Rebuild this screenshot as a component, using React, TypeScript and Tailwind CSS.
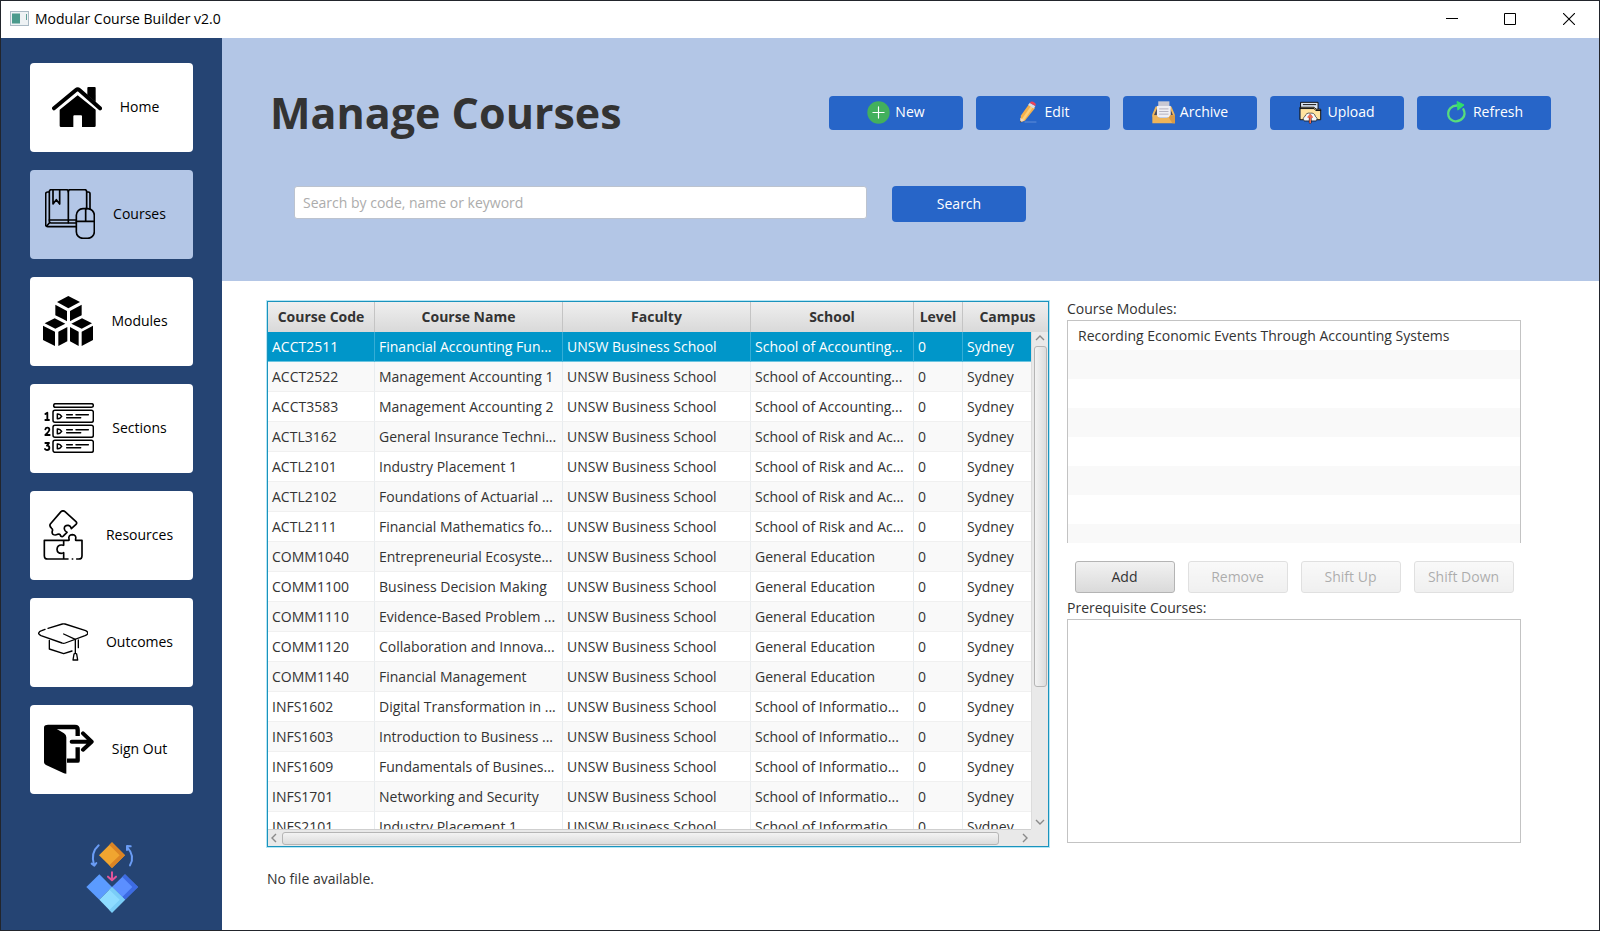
import type { ReactNode } from "react";

type Course = [string, string, string, string, string];

const faculty = "UNSW Business School";

const courses: Course[] = [
  ["ACCT2511", "Financial Accounting Fun...", "School of Accounting...", "0", "Sydney"],
  ["ACCT2522", "Management Accounting 1", "School of Accounting...", "0", "Sydney"],
  ["ACCT3583", "Management Accounting 2", "School of Accounting...", "0", "Sydney"],
  ["ACTL3162", "General Insurance Techni...", "School of Risk and Ac...", "0", "Sydney"],
  ["ACTL2101", "Industry Placement 1", "School of Risk and Ac...", "0", "Sydney"],
  ["ACTL2102", "Foundations of Actuarial ...", "School of Risk and Ac...", "0", "Sydney"],
  ["ACTL2111", "Financial Mathematics fo...", "School of Risk and Ac...", "0", "Sydney"],
  ["COMM1040", "Entrepreneurial Ecosyste...", "General Education", "0", "Sydney"],
  ["COMM1100", "Business Decision Making", "General Education", "0", "Sydney"],
  ["COMM1110", "Evidence-Based Problem ...", "General Education", "0", "Sydney"],
  ["COMM1120", "Collaboration and Innova...", "General Education", "0", "Sydney"],
  ["COMM1140", "Financial Management", "General Education", "0", "Sydney"],
  ["INFS1602", "Digital Transformation in ...", "School of Informatio...", "0", "Sydney"],
  ["INFS1603", "Introduction to Business ...", "School of Informatio...", "0", "Sydney"],
  ["INFS1609", "Fundamentals of Busines...", "School of Informatio...", "0", "Sydney"],
  ["INFS1701", "Networking and Security", "School of Informatio...", "0", "Sydney"],
  ["INFS2101", "Industry Placement 1", "School of Informatio...", "0", "Sydney"],
];

const NavSvg = ({ box, children }: { box: string; children: ReactNode }) => (
  <svg viewBox={box} className="size-[50px] shrink-0" fill="none" stroke="#000" strokeLinecap="round" strokeLinejoin="round" aria-hidden="true">
    {children}
  </svg>
);

const HomeIcon = () => (
  <NavSvg box="153 246 150 150">
    <g fill="#000" stroke="none">
      <path d="M259 264q0-3 3-3h19q3 0 3 3v42l-25-21z" />
      <path d="M230 286l54 43v48q0 4-4 4h-37v-32q0-3-3-3h-20q-3 0-3 3v32h-37q-4 0-4-4v-48z" />
    </g>
    <path d="M159 325l66-55q5-4 10 0l62 55" strokeWidth="12" />
  </NavSvg>
);

const CoursesIcon = () => (
  <NavSvg box="135 567 150 150">
    <g strokeWidth="5">
      <path d="M228 680h-85q-6 0-6-6v-92q0-6 6-6h5" />
      <path d="M228 669h-75q-5 0-5-5v-89q0-6 6-6h45q6 0 6 6 0-6 6-6h43q6 0 6 6v51" />
      <path d="M205 575v93M148 660h80M148 669l-8 9M260 576h5q5 0 5 5v47" />
      <path d="M159 570v42l10-13 10 13v-42" />
      <rect x="229" y="626" width="54" height="89" rx="20" />
      <path d="M229 664h54M257 626v38" />
    </g>
  </NavSvg>
);

const ModulesIcon = () => (
  <NavSvg box="126 107 150 150">
    <g fill="#000" stroke="none">
      <path d="M202 107l35 18-35 19-34-19z" />
      <path d="M163 133l35 19v31l-12-7-23-11zM242 133l-35 19v31l12-7 23-11z" />
      <path d="M161 174l32 16-30 15-32-16z" />
      <path d="M243 174l-32 16 31 15 31-16z" />
      <path d="M126 196l36 18v43l-36-18zM172 214l27-14v43l-27 14zM276 196l-34 18v43l34-18zM233 214l-26-14v43l26 14z" />
    </g>
  </NavSvg>
);

const SectionsIcon = () => (
  <NavSvg box="128 429 150 150">
    <g strokeWidth="4.5">
      <rect x="157" y="431" width="119" height="11" rx="5.5" />
      {[451, 496, 541].map((y) => (
        <g key={y}>
          <rect x="155" y={y} width="121" height="36" rx="6" />
          <path d={`M168 ${y + 11}v14q8 1 13-7-5-8-13-7zM196 ${y + 13}h17M224 ${y + 13}h37M196 ${y + 22}h42`} />
        </g>
      ))}
      <path d="M132 462l6-4v22M132 480h11" strokeWidth="5.5" />
      <path d="M132 508q1-5 6-5 6 0 6 6 0 4-12 16h13" strokeWidth="5.5" />
      <path d="M132 549h11l-6 8q7 0 7 6 0 7-7 7-4 0-6-3" strokeWidth="5.5" />
    </g>
  </NavSvg>
);

const ResourcesIcon = () => (
  <NavSvg box="115 750 150 150">
    <g strokeWidth="5">
      <path d="M184 755q6-5 12 0l33 30q4 4 0 8l-14 13q-2-9-9-10-13-1-12 11 1 7 8 10l-10 10q-4 5-9 1-2-8-9-5-8 4-14 0-4-4-2-10 2-5-2-8-8-7-4-13z" />
      <path d="M192 841h15q2 0 1-4-3-12 10-13 13 1 10 13-1 4 1 4h18v46q0 10-10 10h-6M192 841v15q-3-1-7-1-12 0-13 13 1 12 13 12 4 0 7-2v19M192 841h-58v46q0 10 10 10h61M218 897h1" />
    </g>
  </NavSvg>
);

const OutcomesIcon = () => (
  <NavSvg box="111 111 150 150">
    <g strokeWidth="4">
      <path d="M141 145l43-13q4-1 8 0l62 20q8 4 6 9-1 3-8 6l-59 22q-5 2-10 0l-63-22q-8-4-7-8 2-5 9-7l10-4" />
      <path d="M188 162l35 16v40M145 181v26l43 14 25-8M232 180v23" />
      <path d="M219 222q4-4 8 0l3 18h-14z" />
    </g>
  </NavSvg>
);

const SignOutIcon = () => (
  <NavSvg box="126 431 150 150">
    <path d="M136 440h83q8 0 8 8v19M227 501v40h-32" strokeWidth="13" strokeLinecap="butt" />
    <path d="M126 442q0-8 8-8h10l42 25q7 4 7 12v109q-5 0-9-2l-52-24q-6-3-6-9z" fill="#000" stroke="none" />
    <path d="M209 484h58M243 459l26 25-26 24" strokeWidth="12" />
  </NavSvg>
);

const BrandMark = () => (
  <svg viewBox="258 787 156 213" className="h-[71px] w-[52px]" fill="none" strokeLinecap="round" strokeLinejoin="round" role="img" aria-label="Module blocks">
    <path d="M336 788l39 39-39 38-39-38z" fill="#f0a530" />
    <path d="M336 788l39 39-39 38-8-8 31-30-31-31z" fill="#db8424" />
    <path d="M298 884l38 38-38 38-39-38z" fill="#5b9bff" />
    <path d="M375 884l39 38-39 38-39-38z" fill="#5b8fff" />
    <path d="M375 884l39 38-39 38-8-8 30-30-30-30z" fill="#3d6be3" />
    <path d="M336 922l39 38-39 39-38-39z" fill="#8edcff" />
    <path d="M336 922l39 38-39 39-8-8 31-31-31-30z" fill="#7acdf7" />
    <path d="M336 878v24M324 891l12 11 12-11" stroke="#e0559a" strokeWidth="6" />
    <path d="M296 797q-25 22-14 59M275 852l8 6 6-8M390 857q16-28-8-54M381 811v-12l11 1" stroke="#6a9cf5" strokeWidth="6" />
  </svg>
);

const ActSvg = ({ box, children }: { box: string; children: ReactNode }) => (
  <svg viewBox={box} className="size-[23px] shrink-0" fill="none" strokeLinecap="round" strokeLinejoin="round" aria-hidden="true">
    {children}
  </svg>
);

const NewIcon = () => (
  <ActSvg box="201 122 70 70">
    <circle cx="236" cy="157" r="34" fill="#43b05c" />
    <path d="M236 140v34M219 157h34" stroke="#fff" strokeWidth="3.5" />
  </ActSvg>
);

const EditIcon = () => (
  <ActSvg box="650 121 70 70">
    <path d="M687 130l18 12-31 39-14 5 2-21z" fill="#f5b04a" />
    <path d="M694 134l6 4-29 42-7-3z" fill="#fbd07c" />
    <path d="M660 172l12 8-12 6z" fill="#f0d8c0" />
    <path d="M660 181l4 4-5 2z" fill="#444" />
    <path d="M684 133l5-7 17 10-5 8z" fill="#d8dce4" />
    <path d="M689 127q3-6 10-4l6 4q4 3 1 9z" fill="#ee4358" />
    <path d="M674 185h34" stroke="#6d95dc" strokeWidth="2.5" />
  </ActSvg>
);

const ArchiveIcon = () => (
  <ActSvg box="1055 121 70 70">
    <path d="M1066 138h12v30h-22v-7zM1114 138h-12v30h22v-7z" fill="#edb65c" />
    <path d="M1070 144l-9 20h12v-20zM1110 144l9 20h-12v-20z" fill="#4b4a58" />
    <path d="M1074 122h34v16h-34z" fill="#c9c8d2" />
    <path d="M1070 136h42v36h-42z" fill="#efeef3" />
    <path d="M1078 145h26M1078 153h26M1078 161h26" stroke="#b4b2c0" strokeWidth="3" />
    <path d="M1056 164h14q3 9 10 9h20q7 0 10-9h15v25h-69z" fill="#eeb45a" />
    <path d="M1106 171q3-3 4-7h15v25h-8z" fill="#d99a45" />
  </ActSvg>
);

const UploadIcon = () => (
  <ActSvg box="358 301 70 70">
    <g stroke="#111" strokeWidth="3">
      <path d="M364 305h52v22h-52z" fill="#dce6f2" />
      <path d="M371 312h38" />
      <path d="M362 320h42l6 6h14v32h-62z" fill="#ffe3a0" />
      <path d="M362 324h42l5 6h15" />
      <path d="M373 361q-7-9 3-13 4-12 16-10 13-2 16 10 9 4 3 13z" fill="#f4f7fb" strokeWidth="2" />
    </g>
    <path d="M392 366v-20" stroke="#111" strokeWidth="8" />
    <path d="M392 367v-22M386 350l6-6 6 6" stroke="#f26a4f" strokeWidth="5" />
  </ActSvg>
);

const RefreshIcon = () => (
  <ActSvg box="796 304 70 70">
    <path d="M852 329q8 15-2 27-9 11-23 10-15-2-20-15-4-14 5-25 10-10 25-8" stroke="#58dc7c" strokeWidth="7" />
    <path d="M834 306l20 10-18 15z" fill="#2fe06a" stroke="#2fe06a" strokeWidth="3" />
  </ActSvg>
);

const navItems = [
  { label: "Home", icon: <HomeIcon /> },
  { label: "Courses", icon: <CoursesIcon />, active: true },
  { label: "Modules", icon: <ModulesIcon /> },
  { label: "Sections", icon: <SectionsIcon /> },
  { label: "Resources", icon: <ResourcesIcon /> },
  { label: "Outcomes", icon: <OutcomesIcon /> },
  { label: "Sign Out", icon: <SignOutIcon /> },
];

const actions = [
  { label: "New", icon: <NewIcon /> },
  { label: "Edit", icon: <EditIcon /> },
  { label: "Archive", icon: <ArchiveIcon /> },
  { label: "Upload", icon: <UploadIcon /> },
  { label: "Refresh", icon: <RefreshIcon /> },
];

const Chevron = ({ d }: { d: string }) => (
  <svg viewBox="0 0 12 12" className="size-3 shrink-0" fill="none" stroke="#8a8a8a" strokeWidth="1.4" aria-hidden="true">
    <path d={d} />
  </svg>
);

function TitleBar() {
  return (
    <div className="flex h-[37px] shrink-0 items-center bg-white pb-0.5 pl-[9px]">
      <svg viewBox="0 0 19 15" className="h-[15px] w-[19px]" aria-hidden="true">
        <rect x=".5" y=".5" width="18" height="14" fill="#eef2f4" stroke="#a9b9c4" />
        <rect x="2" y="2.5" width="8" height="10" fill="#4a9a8c" />
        <path d="M16.5 3v6" stroke="#5f9f96" />
      </svg>
      <span className="ml-1.5 flex-1 text-sm text-black">Modular Course Builder v2.0</span>
      <button aria-label="Minimize" className="flex h-full w-[58px] items-center justify-center">
        <svg viewBox="0 0 12 12" className="size-3" stroke="#000"><path d="M0 5.5h12" /></svg>
      </button>
      <button aria-label="Maximize" className="flex h-full w-[58px] items-center justify-center">
        <svg viewBox="0 0 12 12" className="size-3" fill="none" stroke="#000"><path d="M.5.5h11v11H.5z" /></svg>
      </button>
      <button aria-label="Close" className="flex h-full w-[60px] items-center justify-center">
        <svg viewBox="0 0 12 12" className="size-3" stroke="#000" strokeWidth="1.1"><path d="M0 0l12 12M12 0L0 12" /></svg>
      </button>
    </div>
  );
}

function Sidebar() {
  return (
    <nav className="flex w-[221px] shrink-0 flex-col gap-[18px] overflow-hidden bg-[#254473] pt-[25px] pr-[29px] pl-[29px]">
      {navItems.map((n) => (
        <button
          key={n.label}
          className={`flex h-[89px] shrink-0 items-center justify-center gap-[18px] rounded-[4px] pr-3 pb-0.5 text-sm text-black ${n.active ? "bg-[#b3c6e6]" : "bg-white"}`}
        >
          {n.icon}
          {n.label}
        </button>
      ))}
      <div className="mt-[30px] flex justify-center">
        <BrandMark />
      </div>
    </nav>
  );
}

function Header() {
  return (
    <header className="shrink-0 bg-[#b3c6e6] pt-8 pr-12 pb-[59px] pl-12">
      <div className="flex h-[86px] items-center justify-between">
        <h1 className="pb-0.5 text-[43px] leading-none font-bold whitespace-nowrap">Manage Courses</h1>
        <div className="flex gap-[13px]">
          {actions.map((a) => (
            <button key={a.label} className="flex h-[34px] w-[134px] items-center justify-center gap-[5px] rounded-[4px] bg-[#2765c8] pb-0.5 text-sm text-white">
              {a.icon}
              {a.label}
            </button>
          ))}
        </div>
      </div>
      <form className="mt-[30px] ml-6 flex items-start gap-[25px]" onSubmit={(e) => e.preventDefault()}>
        <input
          aria-label="Search courses"
          placeholder="Search by code, name or keyword"
          className="h-[33px] w-[573px] rounded-[3px] border border-[#bcc3cf] bg-white px-2 text-sm placeholder:text-[#acacac]"
        />
        <button className="h-9 w-[134px] rounded-[4px] bg-[#2765c8] text-sm text-white">Search</button>
      </form>
    </header>
  );
}

function CourseTable() {
  const cell = "overflow-hidden border-r border-b px-1 whitespace-nowrap";
  return (
    <div className="grid min-h-0 flex-1 grid-cols-[minmax(0,1fr)_17px] grid-rows-[minmax(0,1fr)_17px] border border-[#1a93bd] bg-white shadow-[0_0_0_1px_#b5e6f5]">
      <div className="col-span-2 col-start-1 row-start-1 overflow-hidden">
        <table className="w-full table-fixed border-separate border-spacing-0 text-sm">
          <colgroup>
            <col className="w-[107px]" />
            <col className="w-[188px]" />
            <col className="w-[188px]" />
            <col className="w-[163px]" />
            <col className="w-[49px]" />
            <col />
          </colgroup>
          <thead>
            <tr className="h-[30px] bg-linear-to-b from-[#efefef] to-[#d9d9d9]">
              {["Course Code", "Course Name", "Faculty", "School", "Level"].map((h) => (
                <th key={h} scope="col" className="border-r border-[#c4c4c4] p-0 font-bold whitespace-nowrap">{h}</th>
              ))}
              <th scope="col" className="p-0 pl-1 font-bold">Campus</th>
            </tr>
          </thead>
          <tbody>
            {courses.map(([code, name, school, level, campus], i) => {
              const tone =
                i === 0
                  ? "border-r-[#35add6] border-b-[#6cc5e0]"
                  : "border-r-[#e8ecef] border-b-[#f0f0f0]";
              return (
                <tr key={code} aria-selected={i === 0} className={`h-[30px] ${i === 0 ? "bg-[#0096c9] text-white" : i % 2 ? "bg-[#f9f9f9]" : "bg-white"}`}>
                  {[code, name, faculty, school, level, campus].map((v, j) => (
                    <td key={j} className={`${cell} ${tone}`}>{v}</td>
                  ))}
                </tr>
              );
            })}
          </tbody>
        </table>
      </div>
      <div className="col-start-2 row-start-1 mt-[30px] flex flex-col items-center gap-0.5 border-l border-[#dcdcdc] bg-[#e9e9e9]">
        <Chevron d="M2 8l4-4 4 4" />
        <div className="min-h-0 w-[13px] flex-[340] rounded-[3px] border border-[#b5b5b5] bg-linear-to-r from-[#f3f3f3] to-[#dcdcdc]" />
        <div className="flex flex-[140] items-end pb-px">
          <Chevron d="M2 4l4 4 4-4" />
        </div>
      </div>
      <div className="col-start-1 row-start-2 flex items-center gap-0.5 border-t border-[#cfcfcf] bg-[#e9e9e9]">
        <Chevron d="M8 2L4 6l4 4" />
        <div className="h-[13px] flex-1 rounded-[3px] border border-[#b5b5b5] bg-linear-to-b from-[#f3f3f3] to-[#dcdcdc]" />
        <div className="flex w-[30px] justify-end">
          <Chevron d="M4 2l4 4-4 4" />
        </div>
      </div>
      <div className="col-start-2 row-start-2 bg-[#e9e9e9]" />
    </div>
  );
}

function SidePanel() {
  return (
    <aside className="flex w-[454px] shrink-0 flex-col">
      <h2 className="h-[19px] text-sm leading-[15px]">Course Modules:</h2>
      <ul className="flex-1 border border-b-0 border-[#c3c3c3] bg-[repeating-linear-gradient(to_bottom,#fff_0px,#fff_29px,#f9f9f9_29px,#f9f9f9_58px)] text-sm">
        <li className="px-2.5 leading-[29px]">Recording Economic Events Through Accounting Systems</li>
      </ul>
      <div className="mt-[18px] flex justify-center gap-[13px]">
        {["Add", "Remove", "Shift Up", "Shift Down"].map((b, i) => (
          <button
            key={b}
            disabled={i > 0}
            className="h-8 w-[100px] rounded-[3px] border border-[#b4b4b4] bg-linear-to-b from-[#f2f2f2] to-[#dadada] text-sm whitespace-nowrap disabled:opacity-40"
          >
            {b}
          </button>
        ))}
      </div>
      <h2 className="mt-1.5 h-5 text-sm leading-[17px]">Prerequisite Courses:</h2>
      <ul className="flex-1 border border-[#c3c3c3]" />
    </aside>
  );
}

export default function App() {
  return (
    <div className="flex h-screen flex-col border border-[#22252c] bg-white font-['Open_Sans','Noto_Sans',sans-serif] text-[#333]">
      <TitleBar />
      <div className="flex min-h-0 flex-1">
        <Sidebar />
        <div className="flex min-w-0 flex-1 flex-col">
          <Header />
          <main className="flex min-h-0 flex-1 flex-col pt-5 pr-[78px] pb-[41px] pl-[45px]">
            <div className="flex min-h-0 flex-1 gap-[18px]">
              <section className="flex min-w-0 flex-1 flex-col">
                <CourseTable />
              </section>
              <div className="flex pb-1">
                <SidePanel />
              </div>
            </div>
            <p className="mt-[22px] text-sm">No file available.</p>
          </main>
        </div>
      </div>
    </div>
  );
}
